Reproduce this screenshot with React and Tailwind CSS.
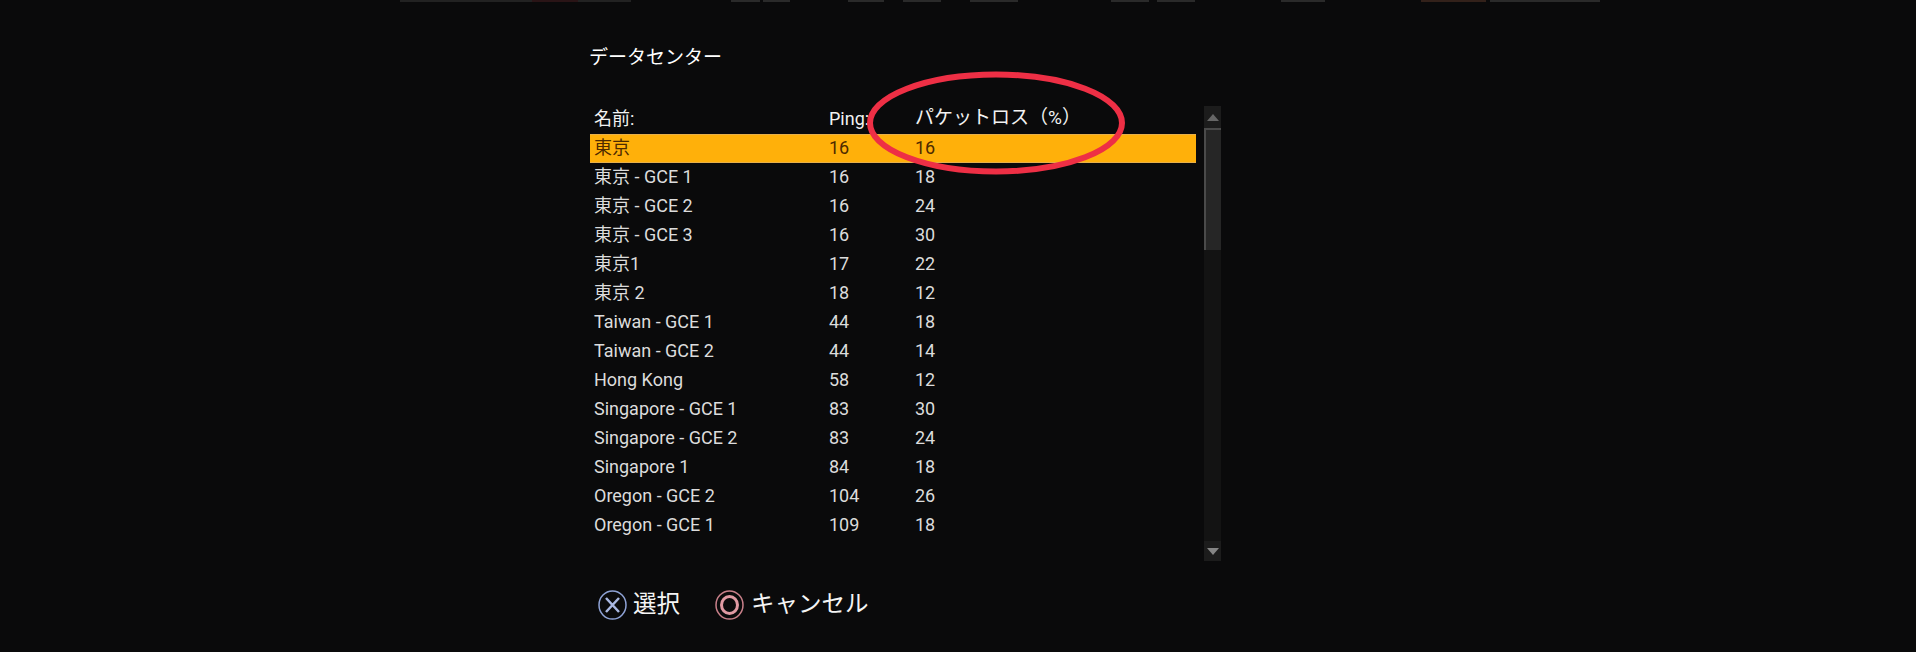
const rows = [
  ["東京", "16", "16"],
  ["東京 - GCE 1", "16", "18"],
  ["東京 - GCE 2", "16", "24"],
  ["東京 - GCE 3", "16", "30"],
  ["東京1", "17", "22"],
  ["東京 2", "18", "12"],
  ["Taiwan - GCE 1", "44", "18"],
  ["Taiwan - GCE 2", "44", "14"],
  ["Hong Kong", "58", "12"],
  ["Singapore - GCE 1", "83", "30"],
  ["Singapore - GCE 2", "83", "24"],
  ["Singapore 1", "84", "18"],
  ["Oregon - GCE 2", "104", "26"],
  ["Oregon - GCE 1", "109", "18"],
];

// faint remains of the screen behind the dialog: [gap before, width, colour]
const topStrip = [
  [400, 132, "bg-[#222222]"],
  [0, 46, "bg-[#2a1416]"],
  [0, 53, "bg-[#222222]"],
  [100, 29, "bg-[#2a2a2a]"],
  [3, 27, "bg-[#2a2a2a]"],
  [58, 36, "bg-[#2a2a2a]"],
  [19, 38, "bg-[#2a2a2a]"],
  [29, 48, "bg-[#2a2a2a]"],
  [93, 38, "bg-[#2a2a2a]"],
  [8, 38, "bg-[#2a2a2a]"],
  [86, 44, "bg-[#2a2a2a]"],
  [96, 65, "bg-[#33211a]"],
  [4, 110, "bg-[#2a2a2a]"],
];

function Row({ name, ping, loss, active }) {
  return (
    <div
      className={`flex h-[29px] items-center pb-[2px] pl-[4px] text-[18px] ${
        active ? "border-y border-[#e8b04a] bg-[#ffb00a] text-[#4d2a00]" : "text-[#dcdcdc]"
      }`}
    >
      <span className="w-[235px]">{name}</span>
      <span className="w-[86px]">{ping}</span>
      <span>{loss}</span>
    </div>
  );
}

export default function App() {
  return (
    <div
      className="relative h-[652px] w-[1916px] overflow-hidden bg-[#0a0a0b] text-white"
      style={{ fontFamily: '"Roboto", "Noto Sans CJK JP", sans-serif' }}
    >
      <div className="flex h-[2px]">
        {topStrip.map(([gap, w, c], i) => (
          <div key={i} className={`h-full shrink-0 ${c}`} style={{ marginLeft: gap, width: w }} />
        ))}
      </div>

      <div className="ml-[590px] w-[631px] pt-[45px]">
        <h1 className="-ml-[1px] text-[19px] leading-[22px]">データセンター</h1>

        <div className="mt-[37px] flex h-[455px] justify-between">
          <div className="relative w-[606px]">
            <div className="flex h-[28px] items-center pb-[3px] pl-[4px] text-[18px] text-[#f2f2f2]">
              <span className="w-[235px]">名前:</span>
              <span className="w-[86px]">Ping:</span>
              <span className="text-[19px]">パケットロス（%）</span>
            </div>
            {rows.map((r, i) => (
              <Row key={r[0]} name={r[0]} ping={r[1]} loss={r[2]} active={i === 0} />
            ))}

            <svg className="absolute left-[272px] top-[-39px]" width="268" height="112" viewBox="0 0 268 112" fill="none">
              <ellipse cx="134" cy="56" rx="126" ry="48.5" stroke="#ee2f45" strokeWidth="6" />
            </svg>
          </div>

          <div className="flex w-[17px] flex-col bg-[#131313]">
            <div className="flex h-[22px] items-center justify-center bg-[#1c1c1c]">
              <svg width="12" height="7" viewBox="0 0 12 7"><path d="M6 0l6 7H0z" fill="#666666" /></svg>
            </div>
            <div className="h-[122px] border-l-2 border-t-2 border-[#4a4a4a] bg-[#262626]" />
            <div className="flex-1" />
            <div className="flex h-[20px] items-center justify-center bg-[#1c1c1c]">
              <svg width="12" height="7" viewBox="0 0 12 7"><path d="M6 7l6-7H0z" fill="#858585" /></svg>
            </div>
          </div>
        </div>

        <div className="mt-[26px] flex items-center pl-[8px] text-[23.5px] text-[#f5f5f5]">
          <svg width="29" height="30" viewBox="0 0 29 30" fill="none" className="mr-[6px]">
            <ellipse cx="14.5" cy="15" rx="13.5" ry="14" stroke="#8fa3d6" strokeWidth="1.5" />
            <path d="M8 8l13 14M21 8L8 22" stroke="#a9b8e2" strokeWidth="2.5" />
          </svg>
          <span className="w-[55px]">選択</span>
          <svg width="29" height="30" viewBox="0 0 29 30" fill="none" className="ml-[27px] mr-[7px]">
            <ellipse cx="14.5" cy="15" rx="13.5" ry="14" stroke="#c9808a" strokeWidth="1.5" />
            <ellipse cx="14.5" cy="15" rx="8" ry="8.5" stroke="#e09aa3" strokeWidth="3" />
          </svg>
          <span>キャンセル</span>
        </div>
      </div>
    </div>
  );
}
